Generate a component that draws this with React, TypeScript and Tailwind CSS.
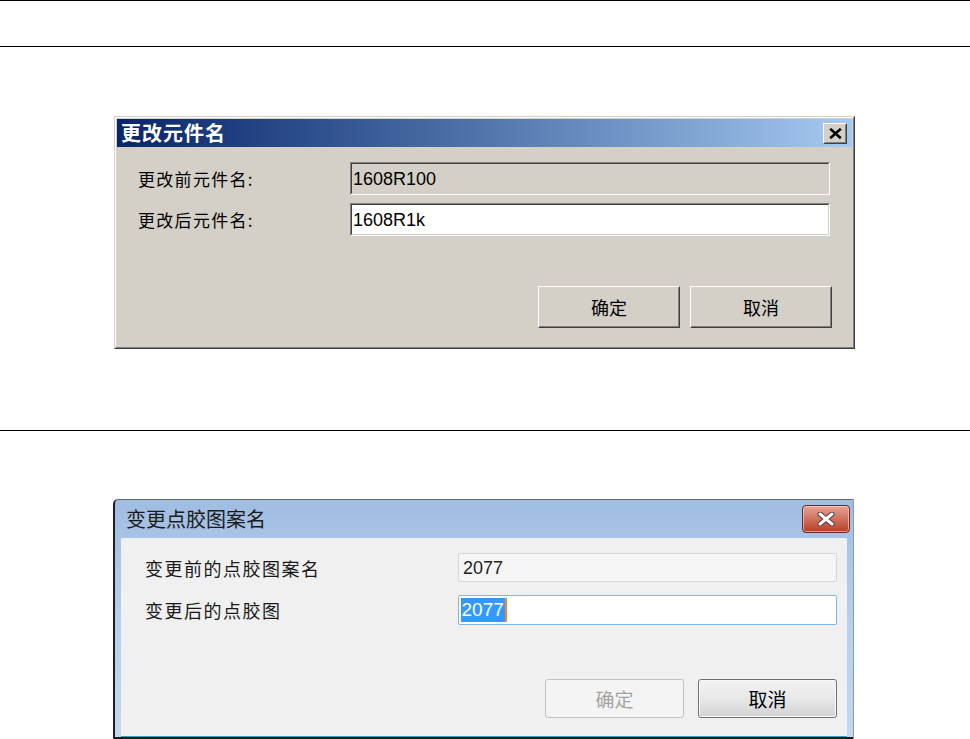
import React from "react";

const cjk = "font-['Noto_Sans_CJK_SC','Noto_Sans',sans-serif]";
const lat = "font-['Liberation_Sans','Noto_Sans_CJK_SC',sans-serif]";

function ClassicClose() {
  return (
    <div className="w-[24px] h-[21px] bg-[#d4d0c8] border border-t-white border-l-white border-r-[#404040] border-b-[#404040] mt-[1px]">
      <div className="w-full h-full border border-t-[#d4d0c8] border-l-[#d4d0c8] border-r-[#808080] border-b-[#808080] flex items-center justify-center">
        <svg width="13" height="11" viewBox="0 0 13 11">
          <path d="M1.2 0.8 L11.8 10.2 M11.8 0.8 L1.2 10.2" stroke="#000" strokeWidth="2.6" fill="none" />
        </svg>
      </div>
    </div>
  );
}

function ClassicField({ value, disabled }: { value: string; disabled?: boolean }) {
  return (
    <div className="w-[480px] h-[33px] border border-t-[#808080] border-l-[#808080] border-r-white border-b-white">
      <div
        className={`w-full h-full border border-t-[#404040] border-l-[#404040] border-r-[#d4d0c8] border-b-[#d4d0c8] flex items-center pl-[1px] ${
          disabled ? "bg-[#d4d0c8]" : "bg-white"
        }`}
      >
        <span className={`${lat} text-[18px] leading-none text-black`}>{value}</span>
      </div>
    </div>
  );
}

function ClassicButton({ label }: { label: string }) {
  return (
    <div className="w-[142px] h-[42px] border border-t-white border-l-white border-r-[#404040] border-b-[#404040] bg-[#d4d0c8]">
      <div className="w-full h-full border border-t-[#d4d0c8] border-l-[#d4d0c8] border-r-[#808080] border-b-[#808080] flex items-center justify-center">
        <span className={`${cjk} text-[18px] leading-none text-black`}>{label}</span>
      </div>
    </div>
  );
}

function Win7Close() {
  return (
    <div className="w-[48px] h-[28px] rounded-[4px] border border-[#6a2a22] bg-linear-to-b from-[#e5a598] via-[#d0705e] to-[#b83b22] flex items-center justify-center shadow-[inset_0_0_0_1px_rgba(255,220,210,0.6)]">
      <svg width="18" height="14" viewBox="0 0 18 14">
        <path d="M3 2 L15 12 M15 2 L3 12" stroke="#5a3a36" strokeWidth="5" strokeLinecap="round" fill="none" />
        <path d="M3 2 L15 12 M15 2 L3 12" stroke="#ffffff" strokeWidth="3" strokeLinecap="round" fill="none" />
      </svg>
    </div>
  );
}

export default function App() {
  return (
    <div className="w-[970px] h-[739px] bg-white overflow-hidden flex flex-col">
      <div className="h-px bg-black shrink-0" />
      <div className="h-[45px] shrink-0" />
      <div className="h-px bg-black shrink-0" />

      {/* Dialog 1: classic */}
      <div className="ml-[114px] mt-[69px] w-[741px] h-[233px] shrink-0 border border-t-[#d4d0c8] border-l-[#d4d0c8] border-r-[#404040] border-b-[#404040] bg-[#d4d0c8]">
        <div className="h-full border border-t-white border-l-white border-r-[#808080] border-b-[#808080] p-px flex flex-col">
          <div className="h-[28px] shrink-0 flex items-center justify-between bg-linear-to-r from-[#0a246a] to-[#a6caf0] pl-[4px] pr-[5px]">
            <span className={`${cjk} text-white font-bold text-[20px] leading-none tracking-[1px]`}>更改元件名</span>
            <ClassicClose />
          </div>
          <div className="flex flex-col pt-[15px] pl-[21px] pr-[22px] gap-[8px]">
            <div className="h-[33px] flex items-center">
              <span className={`${cjk} w-[212px] text-[17px] leading-none tracking-[1.3px] text-black`}>更改前元件名:</span>
              <ClassicField value="1608R100" disabled />
            </div>
            <div className="h-[33px] flex items-center">
              <span className={`${cjk} w-[212px] text-[17px] leading-none tracking-[1.3px] text-black`}>更改后元件名:</span>
              <ClassicField value="1608R1k" />
            </div>
          </div>
          <div className="flex justify-end gap-[10px] mt-[50px] pr-[20px]">
            <ClassicButton label="确定" />
            <ClassicButton label="取消" />
          </div>
        </div>
      </div>

      <div className="h-[81px] shrink-0" />
      <div className="h-px bg-black shrink-0" />

      {/* Dialog 2: Win7 */}
      <div className="ml-[113px] mt-[68px] w-[741px] h-[240px] shrink-0 flex flex-col border-l-2 border-l-[#1e1e1e] border-t border-t-[#6a6a6a] border-r border-r-[#8a9aae] rounded-tl-[5px] bg-linear-to-b from-[#a0bde2] via-[#b7cfeb] to-[#c4d8ef]">
        <div className="h-[38px] shrink-0 flex items-center justify-between pl-[11px] pr-[3px]">
          <span className={`${cjk} text-[20px] leading-none text-[#1b1b1b]`}>变更点胶图案名</span>
          <Win7Close />
        </div>
        <div className="flex-1 mx-[6px] bg-[#f0f0f0] border-b border-b-[#2fa3bd] flex flex-col">
          <div className="flex flex-col pt-[15px] pl-[24px] pr-[10px]">
            <div className="h-[29px] flex items-center">
              <span className={`${cjk} w-[313px] text-[18px] leading-none tracking-[1.5px] text-[#1a1a1a]`}>变更前的点胶图案名</span>
              <div className="w-[379px] h-[29px] rounded-[2px] border border-[#d6d6d6] bg-[#f5f5f5] flex items-center pl-[4px]">
                <span className={`${lat} text-[18px] leading-none text-[#222]`}>2077</span>
              </div>
            </div>
            <div className="h-[30px] mt-[13px] flex items-center">
              <span className={`${cjk} w-[313px] text-[18px] leading-none tracking-[1.5px] text-[#1a1a1a]`}>变更后的点胶图</span>
              <div className="w-[380px] h-[30px] rounded-[2px] border border-[#7fb4e6] bg-white flex items-center pl-[2px]">
                <span className={`${lat} text-[19px] leading-[24px] h-[24px] px-[1px] bg-[#3399ff] text-white`}>2077</span>
                <span className="w-[2px] h-[24px] bg-[#f08a24]" />
              </div>
            </div>
          </div>
          <div className="flex justify-end gap-[14px] mt-[54px] pr-[10px]">
            <div className="w-[139px] h-[39px] rounded-[3px] border border-[#c2c2c2] bg-[#f4f4f4] flex items-center justify-center">
              <span className={`${cjk} text-[19px] leading-none text-[#a3a3a3]`}>确定</span>
            </div>
            <div className="w-[139px] h-[39px] rounded-[3px] border border-[#707070] bg-linear-to-b from-[#f2f2f2] via-[#e8e8e8] to-[#d2d2d2] shadow-[inset_0_0_0_1px_#fbfbfb] flex items-center justify-center">
              <span className={`${cjk} text-[19px] leading-none text-black`}>取消</span>
            </div>
          </div>
        </div>
        <div className="h-[2px] bg-[#1a1a1a] shrink-0" />
      </div>
    </div>
  );
}
